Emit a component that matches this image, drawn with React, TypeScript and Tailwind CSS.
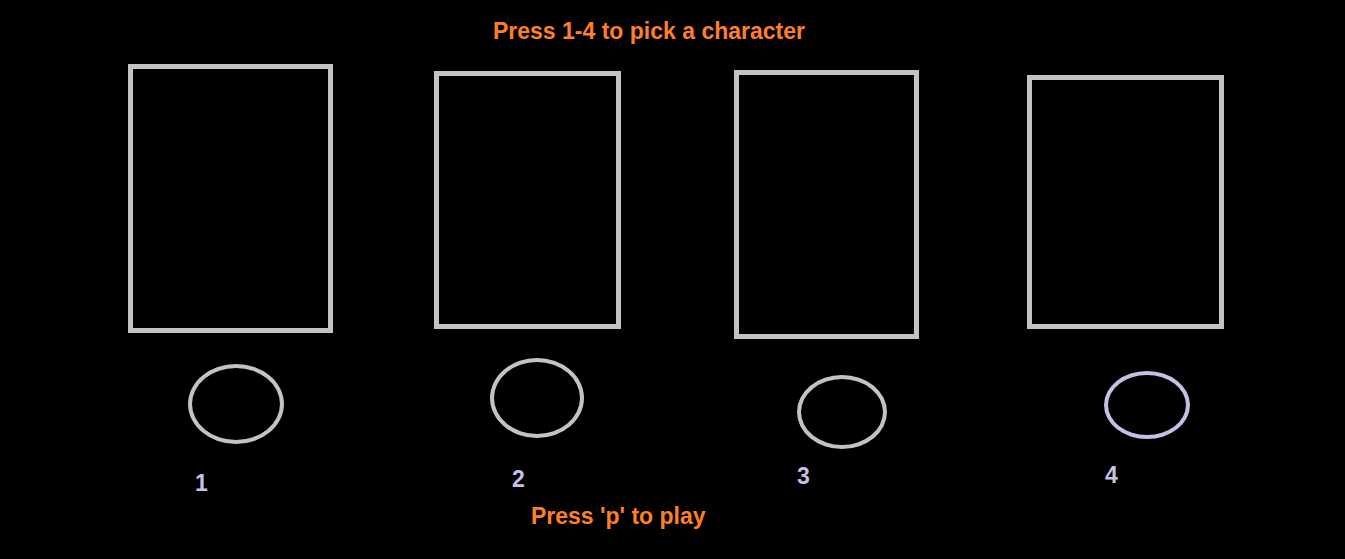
const characters = [
  {
    id: 1,
    slot: "ml-[128px] w-[205px]",
    box: "mt-[21px] h-[269px]",
    ring: "ml-[60px] mt-[31px] w-[96px] h-[80px] border-[#c3c3c3]",
    label: "ml-[67px] mt-[28px]",
  },
  {
    id: 2,
    slot: "ml-[101px] w-[187px]",
    box: "mt-[28px] h-[258px]",
    ring: "ml-[56px] mt-[29px] w-[94px] h-[80px] border-[#c3c3c3]",
    label: "ml-[78px] mt-[30px]",
  },
  {
    id: 3,
    slot: "ml-[113px] w-[185px]",
    box: "mt-[27px] h-[269px]",
    ring: "ml-[63px] mt-[36px] w-[90px] h-[74px] border-[#c3c3c3]",
    label: "ml-[63px] mt-[16px]",
  },
  {
    id: 4,
    slot: "ml-[108px] w-[197px]",
    box: "mt-[32px] h-[254px]",
    ring: "ml-[77px] mt-[42px] w-[86px] h-[68px] border-[#c8bfe7]",
    label: "ml-[78px] mt-[25px]",
  },
];

export default function App() {
  return (
    <div className="w-full h-[559px] bg-black overflow-hidden font-['Liberation_Sans',Arial,sans-serif] font-bold text-[23px] leading-[23px]">
      <div className="pt-[20px] pl-[493px] text-[#ff7f27] whitespace-nowrap">
        Press 1-4 to pick a character
      </div>

      <div className="flex items-start">
        {characters.map((c) => (
          <div key={c.id} className={`flex flex-col shrink-0 ${c.slot}`}>
            <div className={`w-full border-[5px] border-[#c3c3c3] ${c.box}`} />
            <div className={`rounded-[50%] border-4 ${c.ring}`} />
            <div className={`text-[#c8bfe7] ${c.label}`}>{c.id}</div>
          </div>
        ))}
      </div>

      <div className="mt-[10px] pl-[531px] text-[#ff7f27] whitespace-nowrap">
        Press 'p' to play
      </div>
    </div>
  );
}
